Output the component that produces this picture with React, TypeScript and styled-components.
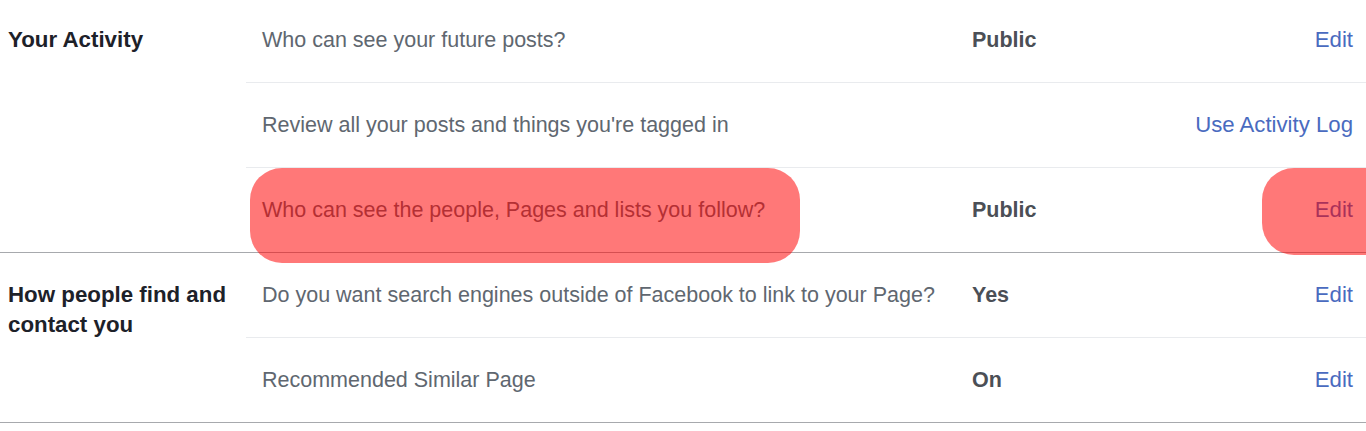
import React from "react";
import styled, { createGlobalStyle } from "styled-components";

const GlobalStyle = createGlobalStyle`
  html, body {
    margin: 0;
    padding: 0;
    background: #ffffff;
    overflow: hidden;
  }
  body {
    font-family: "Liberation Sans", Arial, Helvetica, sans-serif;
  }
`;

interface SettingRow {
  question: string;
  value?: string;
  action: string;
  highlight?: boolean;
}

interface SettingSection {
  title: string;
  rows: SettingRow[];
}

const sections: SettingSection[] = [
  {
    title: "Your Activity",
    rows: [
      { question: "Who can see your future posts?", value: "Public", action: "Edit" },
      { question: "Review all your posts and things you're tagged in", action: "Use Activity Log" },
      { question: "Who can see the people, Pages and lists you follow?", value: "Public", action: "Edit", highlight: true },
    ],
  },
  {
    title: "How people find and contact you",
    rows: [
      { question: "Do you want search engines outside of Facebook to link to your Page?", value: "Yes", action: "Edit" },
      { question: "Recommended Similar Page", value: "On", action: "Edit" },
    ],
  },
];

const Page = styled.div`
  margin-top: -2px;
  width: 1366px;
`;

const Section = styled.section`
  display: grid;
  grid-template-columns: 246px 1fr;
  border-bottom: 1px solid #a7a9ad;
`;

const SectionTitle = styled.h3`
  margin: 0;
  padding: 27px 12px 0 8px;
  font-size: 22.3px;
  line-height: 30px;
  font-weight: 700;
  color: #1d2129;
`;

const Rows = styled.div`
  display: flex;
  flex-direction: column;
`;

const Row = styled.div`
  position: relative;
  display: grid;
  grid-template-columns: 710px 1fr auto;
  align-items: center;
  height: 84px;
  padding: 0 13px 0 16px;
  font-size: 21.5px;
  line-height: 30px;
  & + & {
    border-top: 1px solid #e9ebee;
  }
`;

const Question = styled.span`
  color: #606770;
`;

const Value = styled.span`
  font-weight: 700;
  color: #4b4f56;
`;

const Action = styled.a`
  font-size: 22.2px;
  color: #4a6bbf;
  text-decoration: none;
  text-align: right;
  cursor: pointer;
`;

const Marker = styled.div<{ $left?: number; $right?: number; $width: number; $height: number }>`
  position: absolute;
  top: 0;
  ${(p) => (p.$left !== undefined ? `left: ${p.$left}px;` : "")}
  ${(p) => (p.$right !== undefined ? `right: ${p.$right}px;` : "")}
  width: ${(p) => p.$width}px;
  height: ${(p) => p.$height}px;
  border-radius: 32px;
  background: rgba(255, 0, 0, 0.53);
  pointer-events: none;
  z-index: 2;
`;

function App() {
  return (
    <Page>
      <GlobalStyle />
      {sections.map((section) => (
        <Section key={section.title}>
          <SectionTitle>{section.title}</SectionTitle>
          <Rows>
            {section.rows.map((row) => (
              <Row key={row.question}>
                <Question>{row.question}</Question>
                <Value>{row.value}</Value>
                <Action>{row.action}</Action>
                {row.highlight && (
                  <>
                    <Marker $left={4} $width={550} $height={95} />
                    <Marker $right={-30} $width={134} $height={87} />
                  </>
                )}
              </Row>
            ))}
          </Rows>
        </Section>
      ))}
    </Page>
  );
}

export default App;
